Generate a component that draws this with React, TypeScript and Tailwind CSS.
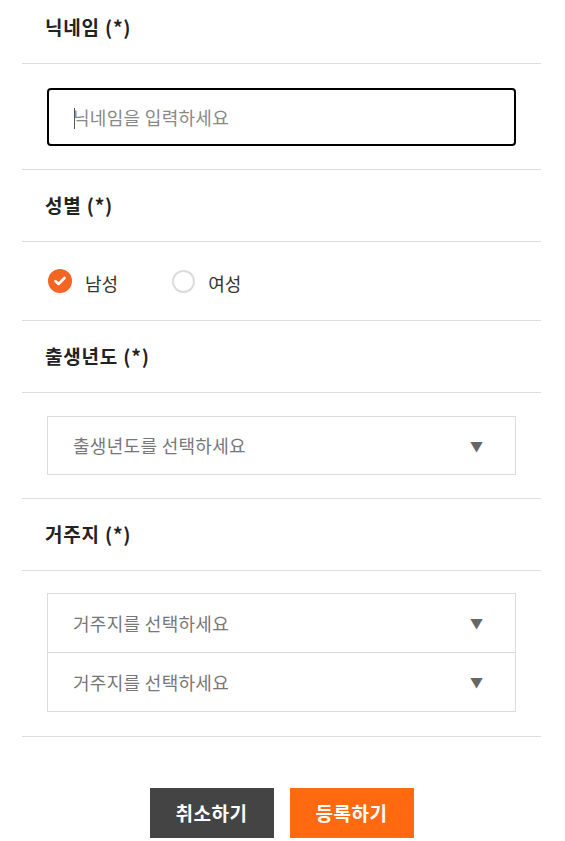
import React, { useState } from "react";

const font = { fontFamily: '"Noto Sans CJK KR", "Noto Sans", sans-serif' };

function SectionTitle({ children, first }: { children: React.ReactNode; first?: boolean }) {
  return (
    <div
      className={`flex items-center px-[23px] border-b border-[#dddddd] ${
        first ? "h-[64px] pb-[8px]" : "h-[72px]"
      }`}
    >
      <h3 className="text-[19px] font-bold tracking-[0.8px] text-[#222]">{children}</h3>
    </div>
  );
}

function SelectBox({ label, className = "" }: { label: string; className?: string }) {
  return (
    <div
      className={`flex items-center justify-between border border-[#dcdcdc] bg-white pl-[25px] pr-[32px] ${className}`}
    >
      <span className="text-[18px] tracking-[0.3px] text-[#777]">{label}</span>
      <span className="text-[13px] text-[#666]">▼</span>
    </div>
  );
}

function Radio({ checked, label, onClick }: { checked: boolean; label: string; onClick: () => void }) {
  return (
    <button onClick={onClick} className="flex items-center gap-[13px]">
      {checked ? (
        <span className="flex items-center justify-center w-[24px] h-[24px] rounded-full bg-[#f26522]">
          <svg width="14" height="14" viewBox="0 0 14 14" fill="none">
            <path d="M2.5 7.2 L5.6 10 L11.5 4" stroke="white" strokeWidth="2.6" strokeLinecap="round" strokeLinejoin="round" />
          </svg>
        </span>
      ) : (
        <span className="w-[23px] h-[23px] rounded-full border-2 border-[#dcdcdc] bg-white" />
      )}
      <span className="text-[18px] text-[#333] pt-[4px]">{label}</span>
    </button>
  );
}

export default function App() {
  const [gender, setGender] = useState("m");

  return (
    <div className="bg-white min-h-[841px] px-[22px] pr-[24px]" style={font}>
      <SectionTitle first>닉네임 (*)</SectionTitle>
      <div className="px-[25px] pt-[24px] pb-[23px] border-b border-[#dddddd]">
        <div className="relative flex items-center h-[58px] border-2 border-black rounded-[4px] px-[24px]">
          <span className="absolute left-[25px] top-[18px] w-px h-[21px] bg-[#555]" />
          <input
            placeholder="닉네임을 입력하세요"
            className="w-full outline-none text-[18px] tracking-[0.3px] text-[#333] placeholder:text-[#888]"
          />
        </div>
      </div>

      <SectionTitle>성별 (*)</SectionTitle>
      <div className="flex items-center gap-[54px] h-[79px] pl-[26px] border-b border-[#dddddd]">
        <Radio checked={gender === "m"} label="남성" onClick={() => setGender("m")} />
        <Radio checked={gender === "f"} label="여성" onClick={() => setGender("f")} />
      </div>

      <SectionTitle>출생년도 (*)</SectionTitle>
      <div className="px-[25px] pt-[23px] pb-[23px] border-b border-[#dddddd]">
        <SelectBox label="출생년도를 선택하세요" className="h-[59px]" />
      </div>

      <SectionTitle>거주지 (*)</SectionTitle>
      <div className="px-[25px] pt-[22px] pb-[24px] border-b border-[#dddddd]">
        <SelectBox label="거주지를 선택하세요" className="h-[60px]" />
        <SelectBox label="거주지를 선택하세요" className="h-[60px] -mt-px" />
      </div>

      <div className="flex justify-center gap-[16px] pt-[51px]">
        <button className="w-[124px] h-[50px] bg-[#444444] text-white text-[19px] tracking-[0.5px] font-bold">취소하기</button>
        <button className="w-[124px] h-[50px] bg-[#ff6a10] text-white text-[19px] tracking-[0.5px] font-bold">등록하기</button>
      </div>
    </div>
  );
}
